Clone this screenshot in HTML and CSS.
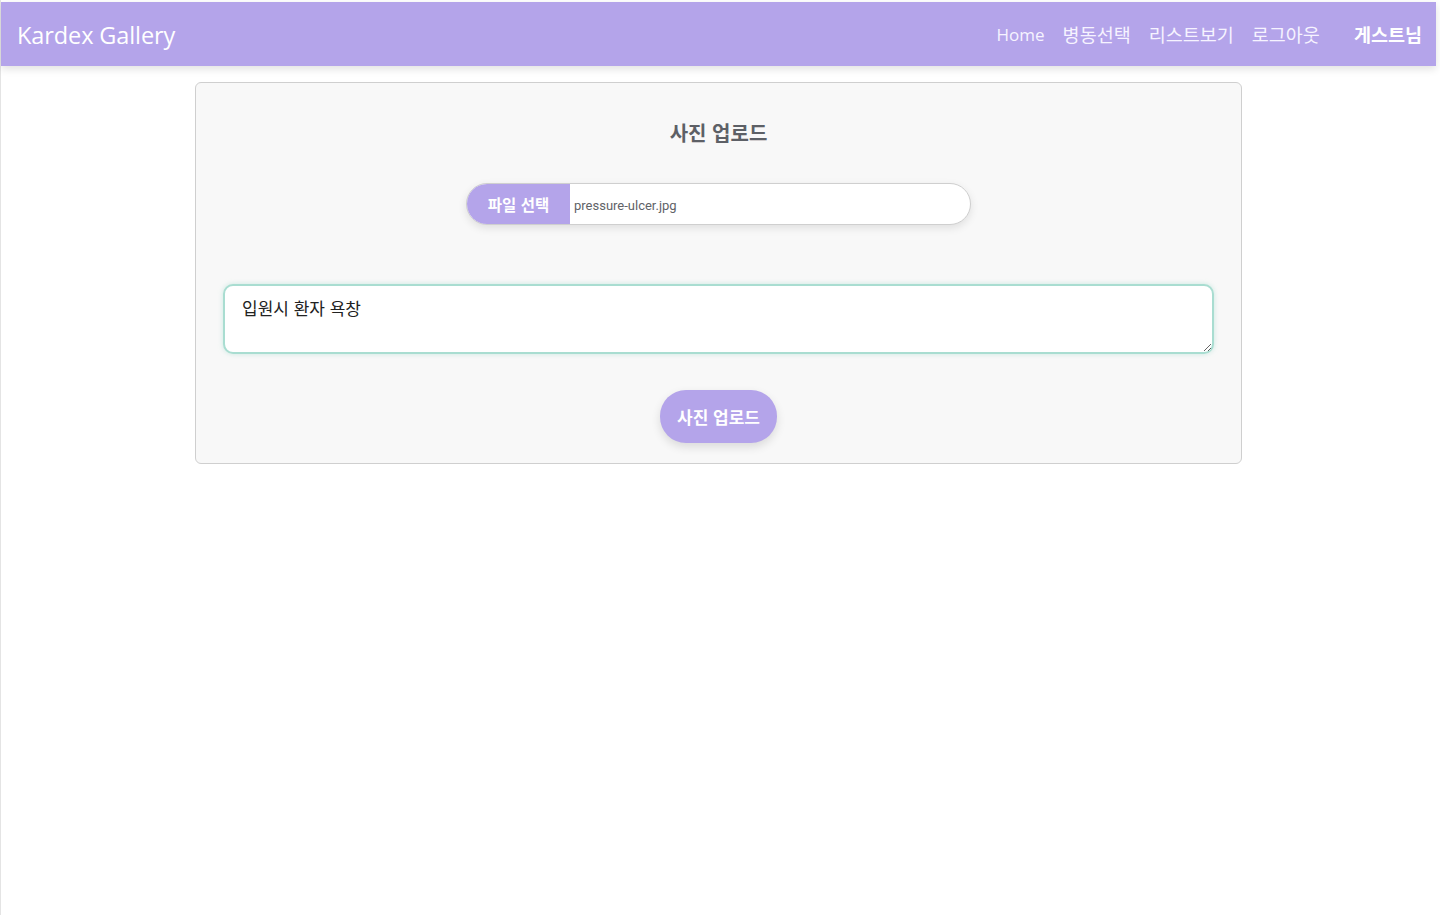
FILE: index.html
```html
<!DOCTYPE html>
<html lang="ko">
<head>
<meta charset="utf-8">
<title>Kardex Gallery</title>
<link rel="stylesheet" href="styles.css">
</head>
<body>
<div class="frame">
  <header class="navbar">
    <a class="brand" href="#">Kardex Gallery</a>
    <nav class="nav">
      <a href="#" class="nav-link nav-home">Home</a>
      <a href="#" class="nav-link">병동선택</a>
      <a href="#" class="nav-link">리스트보기</a>
      <a href="#" class="nav-link">로그아웃</a>
      <span class="nav-user">게스트님</span>
    </nav>
  </header>
  <main class="main">
    <section class="card">
      <h2 class="card-title">사진 업로드</h2>
      <div class="file-row">
        <label class="file-input">
          <span class="file-btn">파일 선택</span>
          <span class="file-name">pressure-ulcer.jpg</span>
        </label>
      </div>
      <textarea class="memo">입원시 환자 욕창</textarea>
      <div class="submit-row">
        <button class="submit-btn" type="button">사진 업로드</button>
      </div>
    </section>
  </main>
</div>
</body>
</html>
```
FILE: styles.css
```css
html, body {
  margin: 0;
  padding: 0;
  background: #ffffff;
}
body {
  font-family: "Open Sans", "Noto Sans CJK KR", sans-serif;
}
.frame {
  padding: 2px 4px 0 0;
  min-height: 915px;
  box-sizing: border-box;
  border-left: 1px solid #e4e4e4;
}
.navbar {
  height: 64px;
  background: #b4a4ea;
  display: flex;
  align-items: center;
  justify-content: space-between;
  padding: 0 14px 0 16px;
  box-shadow: 0 3px 8px rgba(0, 0, 0, 0.12);
}
.brand {
  color: #ffffff;
  text-decoration: none;
  font-family: "Open Sans", "Noto Sans CJK KR", sans-serif;
  font-size: 23.5px;
  letter-spacing: -0.1px;
  margin-top: 1px;
}
.nav {
  display: flex;
  align-items: center;
  gap: 18px;
}
.nav-link {
  color: #f6f3ff;
  text-decoration: none;
  font-family: "Noto Sans CJK KR", sans-serif;
  font-size: 18.5px;
  font-weight: 400;
}
.nav-home {
  font-family: "Open Sans", sans-serif;
  font-size: 17px;
}
.nav-user {
  color: #ffffff;
  font-family: "Noto Sans CJK KR", sans-serif;
  font-weight: 700;
  font-size: 18.5px;
  margin-left: 16px;
}
.main {
  display: flex;
  justify-content: center;
  padding-top: 16px;
}
.card {
  width: 1047px;
  box-sizing: border-box;
  background: #f8f8f8;
  border: 1px solid #cfcfcf;
  border-radius: 6px;
  padding: 35px 27px 20px;
}
.card-title {
  margin: 0;
  text-align: center;
  font-family: "Noto Sans CJK KR", sans-serif;
  font-size: 20px;
  line-height: 30px;
  font-weight: 700;
  color: #5d6066;
}
.file-row {
  display: flex;
  justify-content: center;
  margin-top: 35px;
}
.file-input {
  display: flex;
  width: 505px;
  height: 42px;
  box-sizing: border-box;
  border: 1px solid #cfcfcf;
  border-radius: 21px;
  overflow: hidden;
  background: #ffffff;
  box-shadow: 0 3px 8px rgba(0, 0, 0, 0.1);
}
.file-btn {
  width: 103px;
  background: #b4a4ea;
  color: #ffffff;
  font-family: "Noto Sans CJK KR", sans-serif;
  font-weight: 700;
  font-size: 15.5px;
  display: flex;
  align-items: center;
  justify-content: center;
}
.file-name {
  display: flex;
  align-items: center;
  padding-left: 4px;
  font-family: Roboto, "Noto Sans CJK KR", sans-serif;
  font-size: 13px;
  color: #5f6368;
  padding-top: 2px;
}
.memo {
  display: block;
  width: 100%;
  height: 70px;
  box-sizing: border-box;
  margin-top: 59px;
  border: 2px solid #a9ddd1;
  border-radius: 10px;
  padding: 9px 17px;
  font-family: "Noto Sans CJK KR", sans-serif;
  font-size: 17px;
  line-height: 26px;
  color: #222222;
  background: #ffffff;
  box-shadow: 0 0 5px rgba(169, 221, 209, 0.6);
  resize: vertical;
  outline: none;
}
.submit-row {
  display: flex;
  justify-content: center;
  margin-top: 36px;
}
.submit-btn {
  width: 117px;
  height: 53px;
  border: none;
  border-radius: 26px;
  background: #b4a4ea;
  color: #ffffff;
  font-family: "Noto Sans CJK KR", sans-serif;
  font-weight: 700;
  font-size: 17px;
  box-shadow: 0 4px 10px rgba(0, 0, 0, 0.12);
  cursor: pointer;
}
```
